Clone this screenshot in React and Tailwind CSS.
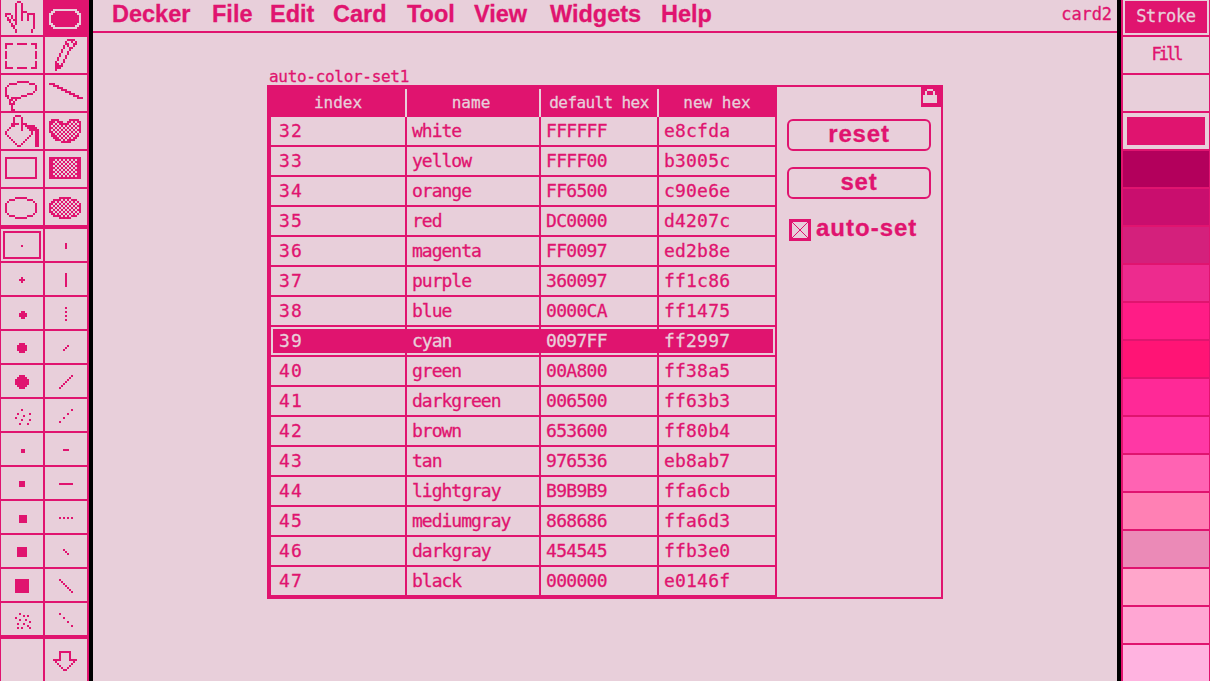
const pink = '#e0146f';

const menus = [
  ['Decker', 'w-[100px]'],
  ['File', 'w-[58px]'],
  ['Edit', 'w-[63px]'],
  ['Card', 'w-[74px]'],
  ['Tool', 'w-[67px]'],
  ['View', 'w-[76px]'],
  ['Widgets', 'w-[111px]'],
  ['Help', 'w-[60px]'],
];

const colors = [
  [32, 'white', 'FFFFFF', 'e8cfda'],
  [33, 'yellow', 'FFFF00', 'b3005c'],
  [34, 'orange', 'FF6500', 'c90e6e'],
  [35, 'red', 'DC0000', 'd4207c'],
  [36, 'magenta', 'FF0097', 'ed2b8e'],
  [37, 'purple', '360097', 'ff1c86'],
  [38, 'blue', '0000CA', 'ff1475'],
  [39, 'cyan', '0097FF', 'ff2997'],
  [40, 'green', '00A800', 'ff38a5'],
  [41, 'darkgreen', '006500', 'ff63b3'],
  [42, 'brown', '653600', 'ff80b4'],
  [43, 'tan', '976536', 'eb8ab7'],
  [44, 'lightgray', 'B9B9B9', 'ffa6cb'],
  [45, 'mediumgray', '868686', 'ffa6d3'],
  [46, 'darkgray', '454545', 'ffb3e0'],
  [47, 'black', '000000', 'e0146f'],
];

const swatches = [
  'bg-[#b3005c]', 'bg-[#c90e6e]', 'bg-[#d4207c]', 'bg-[#ed2b8e]', 'bg-[#ff1c86]',
  'bg-[#ff1475]', 'bg-[#ff2997]', 'bg-[#ff38a5]', 'bg-[#ff63b3]', 'bg-[#ff80b4]',
  'bg-[#eb8ab7]', 'bg-[#ffa6cb]', 'bg-[#ffa6d3]',
];

// pixel art helpers, one art pixel is 2 screen pixels
function fromRows(start, rows) {
  const out = [];
  rows.forEach((r, y) => {
    [...r].forEach((ch, x) => {
      if (ch === 'x' || ch === '#' || (ch === 'c' && (x + y + start) % 2 === 0)) out.push([x, y + start]);
    });
  });
  return out;
}

function block(c0, r0, size, cut = 0) {
  const out = [];
  for (let y = 0; y < size; y++) {
    for (let x = 0; x < size; x++) {
      const dx = Math.min(x, size - 1 - x);
      const dy = Math.min(y, size - 1 - y);
      if (dx + dy >= cut) out.push([c0 + x, r0 + y]);
    }
  }
  return out;
}

const frame = (c0, r0, c1, r1) => {
  const out = [];
  for (let x = c0; x <= c1; x++) out.push([x, r0], [x, r1]);
  for (let y = r0; y <= r1; y++) out.push([c0, y], [c1, y]);
  return out;
};

const hline = (c0, c1, r) => Array.from({ length: c1 - c0 + 1 }, (_, i) => [c0 + i, r]);
const vline = (c, r0, r1) => Array.from({ length: r1 - r0 + 1 }, (_, i) => [c, r0 + i]);

function Pixels({ cells, w = 21, h = 18, className = '' }) {
  return (
    <svg
      width={w * 2}
      height={h * 2}
      viewBox={`0 0 ${w} ${h}`}
      shapeRendering="crispEdges"
      fill="currentColor"
      className={`block shrink-0 ${className}`}
    >
      {cells.map(([x, y], i) => (
        <rect key={i} x={x} y={y} width="1" height="1" />
      ))}
    </svg>
  );
}

const hand = fromRows(1, [
  '........##...........',
  '.......#..#..........',
  '.......#..#..........',
  '.......#..#..........',
  '.......#..#..........',
  '.......#..###........',
  '..###..#..#..####....',
  '..#..#.#..#..#..#....',
  '...#.#.#..#..#..#....',
  '...##.##..#..#..#....',
  '....#..#........#....',
  '.....#.#........#....',
  '.....##.........#....',
  '......#.........#....',
  '.......#.......#.....',
  '.......#.......#.....',
]);

const pill = fromRows(5, [
  '....############.....',
  '...##..........##....',
  '..##............##...',
  '..#..............#...',
  '..#..............#...',
  '..#..............#...',
  '..#..............#...',
  '..##............##...',
  '...##..........##....',
  '....############.....',
]);

const marquee = fromRows(3, [
  '..####..#####..###...',
  '..#..............#...',
  '..#..............#...',
  '.....................',
  '..#..............#...',
  '..#..............#...',
  '..#..............#...',
  '..#..............#...',
  '.....................',
  '..#..............#...',
  '..#..............#...',
  '..#..............#...',
  '..####..#####..###...',
]);

const pencil = fromRows(1, [
  '...........####......',
  '..........#..#.#.....',
  '..........##..##.....',
  '.........#.#..#......',
  '.........#..##.......',
  '........#...#........',
  '........#..#.........',
  '.......#...#.........',
  '.......#..#..........',
  '......#...#..........',
  '......#..#...........',
  '.....#...#...........',
  '.....##.#............',
  '.....####............',
  '.....###.............',
  '.....#...............',
]);

const lasso = fromRows(3, [
  '........######.......',
  '....####......###....',
  '...#.............#...',
  '..#..............#...',
  '..#..............#...',
  '..#.............#....',
  '..#..........###.....',
  '..##......###........',
  '...#.#####...........',
  '....##.#.............',
  '....#.#..............',
  '....###..............',
  '.....#...............',
  '.....#...............',
  '.....##..............',
]);

const line = Array.from({ length: 8 }, (_, i) => [[2 + 2 * i, 4 + i], [3 + 2 * i, 4 + i], [4 + 2 * i, 4 + i]]).flat();

const bucket = fromRows(1, [
  '.......###...........',
  '......#...#..........',
  '......#...#..........',
  '......#...#..........',
  '.....####.###........',
  '.....##...#.#####....',
  '....#.....#..#####...',
  '...#......#...#####..',
  '..#............#.##..',
  '..#............#.##..',
  '...#..........#..##..',
  '....#........#...##..',
  '.....#......#....##..',
  '......#....#.....##..',
  '.......#..#......##..',
  '........##.......##..',
]);

const heart = fromRows(3, [
  '...xxxx.....xxxxx....',
  '..xxcccxx..xxcccxx...',
  '..xcccccxxxxcccccx...',
  '..xccccccccccccccx...',
  '..xccccccccccccccx...',
  '..xccccccccccccccx...',
  '..xccccccccccccccx...',
  '...xccccccccccccx....',
  '...xxccccccccccxx....',
  '....xxccccccccxx.....',
  '.....xxxccccxxx......',
  '........xxxxx........',
]);

const rect = frame(2, 3, 17, 13);
const rectFill = fromRows(3, [
  '..xxxxxxxxxxxxxxxx...',
  ...Array.from({ length: 9 }, () => '..xxccccccccccccxx...'),
  '..xxxxxxxxxxxxxxxx...',
]);

const oval = fromRows(4, [
  '.......######........',
  '....###......###.....',
  '...#............#....',
  '..#..............#...',
  '..#..............#...',
  '..#..............#...',
  '..#..............#...',
  '..#..............#...',
  '...#............#....',
  '....###......###.....',
  '.......######........',
]);

const ovalFill = fromRows(4, [
  '.......xxxxxx........',
  '....xxxccccccxxx.....',
  '...xccccccccccccx....',
  '..xccccccccccccccx...',
  '..xccccccccccccccx...',
  '..xccccccccccccccx...',
  '..xccccccccccccccx...',
  '..xccccccccccccccx...',
  '...xccccccccccccx....',
  '....xxxccccccxxx.....',
  '.......xxxxxx........',
]);

const tools = [
  [hand, false], [pill, true],
  [marquee, false], [pencil, false],
  [lasso, false], [line, false],
  [bucket, false], [heart, false],
  [rect, false], [rectFill, false],
  [oval, false], [ovalFill, false],
];

const diag = (c0, r0, n, step, dir) =>
  Array.from({ length: n }, (_, i) => [c0 + i * step, dir > 0 ? r0 + i * step : r0 - i * step]);

const brushes = [
  [...frame(1, 1, 19, 14), [10, 8]],
  vline(10, 7, 9),
  [[10, 7], [9, 8], [10, 8], [11, 8], [10, 9]],
  vline(10, 5, 11),
  block(9, 7, 4, 1),
  [[10, 5], [10, 7], [10, 9], [10, 11]],
  block(8, 6, 5, 1),
  diag(9, 9, 3, 1, -1),
  block(7, 5, 7, 2),
  diag(7, 11, 7, 1, -1),
  [[10, 5], [8, 7], [14, 7], [11, 8], [7, 9], [10, 10], [14, 10], [9, 12], [13, 12]],
  diag(7, 11, 4, 2, -1),
  block(10, 8, 2),
  hline(9, 11, 8),
  block(9, 7, 3),
  hline(7, 13, 8),
  block(9, 7, 4),
  [[7, 8], [9, 8], [11, 8], [13, 8]],
  block(8, 6, 5),
  diag(9, 7, 3, 1, 1),
  block(7, 5, 7),
  diag(7, 5, 7, 1, 1),
  [[9, 5], [11, 6], [13, 6], [7, 7], [9, 8], [12, 8], [14, 9], [8, 10], [11, 10], [13, 11], [8, 12], [10, 12], [14, 12]],
  diag(7, 5, 4, 2, 1),
];

const arrow = fromRows(6, [
  '.......######........',
  '.......#....#........',
  '.......#....#........',
  '.......#....#........',
  '....####....####.....',
  '.....#........#......',
  '......#......#.......',
  '.......#....#........',
  '........#..#.........',
  '.........##..........',
]);

const lock = fromRows(0, [
  '..###..',
  '.#...#.',
  '.#...#.',
  '#######',
  '#######',
  '#######',
  '#######',
]);

function Toolbar() {
  return (
    <aside className="w-[89px] shrink-0 bg-[#e0146f] flex flex-col">
      <div className="grid grid-cols-[42px_42px] auto-rows-[36px] gap-[2px] pl-[1px] pb-[4px] -mt-px">
        {tools.map(([cells, active], i) => (
          <div key={i} className={active ? 'text-[#e8cfda]' : 'bg-[#e8cfda] text-[#e0146f]'}>
            <Pixels cells={cells} />
          </div>
        ))}
      </div>
      <div className="grid grid-cols-[42px_42px] auto-rows-[32px] gap-[2px] pl-[1px] pb-[4px]">
        {brushes.map((cells, i) => (
          <div key={i} className="bg-[#e8cfda] text-[#e0146f]">
            <Pixels cells={cells} h={16} />
          </div>
        ))}
      </div>
      <div className="grid grid-cols-[42px_42px] gap-[2px] pl-[1px] flex-1">
        <div className="bg-[#e8cfda]" />
        <div className="bg-[#e8cfda] text-[#e0146f]">
          <Pixels cells={arrow} h={21} />
        </div>
      </div>
    </aside>
  );
}

function Row({ color, last }) {
  const [index, name, hex, next] = color;
  const selected = index === 39;
  const cell = selected ? 'bg-[#e0146f] text-[#e8cfda] h-[24px]' : 'h-[24px]';
  return (
    <div className={`flex ${last ? 'h-[28px]' : 'h-[30px] border-b-2 border-[#e0146f]'}`}>
      <div className="w-[134px] py-[2px]">
        <div className={`flex items-center tracking-[1.2px] ${selected ? 'ml-[2px] pl-[6px]' : 'pl-[8px]'} ${cell}`}>{index}</div>
      </div>
      <div className="w-[134px] border-l-2 border-[#e0146f] py-[2px]">
        <div className={`flex items-center pl-[5px] tracking-[-1px] ${cell}`}>{name}</div>
      </div>
      <div className="w-[118px] border-l-2 border-[#e0146f] py-[2px]">
        <div className={`flex items-center pl-[5px] tracking-[-0.7px] ${cell}`}>{hex}</div>
      </div>
      <div className="w-[118px] border-l-2 border-[#e0146f] py-[2px]">
        <div className={`flex items-center pl-[5px] tracking-[0.2px] ${selected ? 'mr-[2px]' : ''} ${cell}`}>{next}</div>
      </div>
    </div>
  );
}

function ColorTable() {
  return (
    <div className="w-[508px] border-l-2 border-r-2 border-b-2 border-[#e0146f] text-[18px] leading-none">
      <div className="flex h-[30px] bg-[#e0146f] text-[#e8cfda] text-[16px] pt-[2px]">
        <div className="w-[134px] flex items-center justify-center">index</div>
        <div className="w-[134px] border-l-2 border-[#e8cfda] flex items-center justify-center pr-[4px]">name</div>
        <div className="w-[118px] border-l-2 border-[#e8cfda] flex items-center justify-center tracking-[-0.6px]">default hex</div>
        <div className="w-[118px] border-l-2 border-[#e8cfda] flex items-center justify-center">new hex</div>
      </div>
      {colors.map((c, i) => (
        <Row key={c[0]} color={c} last={i === colors.length - 1} />
      ))}
    </div>
  );
}

function Button({ children }) {
  return (
    <button className="w-[144px] h-[32px] rounded-[6px] border-2 border-[#e0146f] pb-[2px] font-['Liberation_Sans',sans-serif] font-bold text-[24px] leading-none text-[#e0146f] tracking-[0.8px]">
      {children}
    </button>
  );
}

function SidePanel() {
  return (
    <div className="relative flex-1 pl-[10px] pt-[32px] flex flex-col gap-[16px]">
      <div className="absolute top-0 right-0 w-[20px] h-[20px] bg-[#e0146f] text-[#e8cfda] pl-[2px] pt-[2px]">
        <svg width="14" height="14" viewBox="0 0 7 7" shapeRendering="crispEdges" fill="currentColor" className="block">
          {lock.map(([x, y], i) => (
            <rect key={i} x={x} y={y} width="1" height="1" />
          ))}
        </svg>
      </div>
      <Button>reset</Button>
      <Button>set</Button>
      <label className="flex items-center gap-[5px] ml-[2px] mt-[4px] h-[22px]">
        <svg width="22" height="22" viewBox="0 0 22 22" shapeRendering="crispEdges" className="block shrink-0">
          <rect x="1.5" y="1.5" width="19" height="19" fill="none" stroke={pink} strokeWidth="3" />
          <path d="M3 3L19 19M19 3L3 19" fill="none" stroke={pink} strokeWidth="1.4" />
        </svg>
        <span className="font-['Liberation_Sans',sans-serif] font-bold text-[24px] leading-none tracking-[1px] pb-[4px]">auto-set</span>
      </label>
    </div>
  );
}

function Palette() {
  return (
    <aside className="w-[89px] shrink-0 bg-[#e0146f] pl-[2px] pr-[1px] flex flex-col gap-[2px]">
      <div className="h-[35px] bg-[#e8cfda] px-[2px] pt-[1px] pb-[2px]">
        <div className="h-full bg-[#e0146f] text-[#e8cfda] flex items-center justify-center text-[17px] tracking-[-0.3px]">Stroke</div>
      </div>
      <div className="h-[36px] bg-[#e8cfda] flex items-center justify-center text-[17px] tracking-[-3px]">Fill</div>
      <div className="h-[36px] bg-[#e8cfda]" />
      <div className="h-[36px] bg-[#e8cfda] p-[4px]">
        <div className="h-full bg-[#e0146f]" />
      </div>
      {swatches.map((s) => (
        <div key={s} className={`h-[36px] ${s}`} />
      ))}
      <div className="flex-1 bg-[#ffb3e0]" />
    </aside>
  );
}

export default function App() {
  return (
    <div className="flex w-[1210px] h-[681px] overflow-hidden bg-[#e8cfda] text-[#e0146f] font-['DejaVu_Sans_Mono',monospace] [-webkit-text-stroke:0.3px_currentColor]">
      <Toolbar />
      <main className="flex-1 flex flex-col border-x-4 border-black">
        <header className="h-[33px] shrink-0 border-b-2 border-[#e0146f] flex items-center pl-[19px] pr-[5px] pb-[2px]">
          <nav className="flex flex-1 font-['Liberation_Sans',sans-serif] font-bold text-[23.5px] leading-none">
            {menus.map(([label, width]) => (
              <span key={label} className={width}>{label}</span>
            ))}
          </nav>
          <span className="text-[17px] leading-none tracking-[-0.1px]">card2</span>
        </header>
        <section className="flex-1 pl-[174px] pt-[35px]">
          <div className="pl-[2px] h-[17px] text-[16px] leading-[17px] tracking-[-0.3px]">auto-color-set1</div>
          <div className="w-[676px] h-[514px] border-2 border-[#e0146f] flex">
            <ColorTable />
            <SidePanel />
          </div>
        </section>
      </main>
      <Palette />
    </div>
  );
}
